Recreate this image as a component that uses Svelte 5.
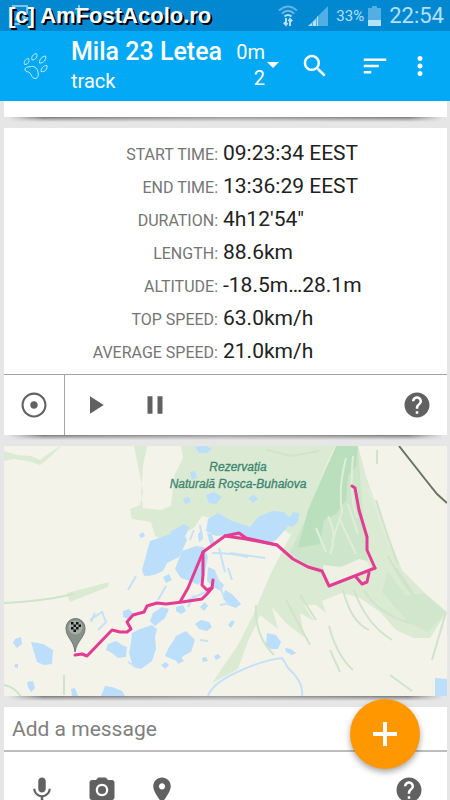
<script lang="ts">
	interface Stat {
		label: string;
		value: string;
	}

	const stats: Stat[] = [
		{ label: 'START TIME:', value: '09:23:34 EEST' },
		{ label: 'END TIME:', value: '13:36:29 EEST' },
		{ label: 'DURATION:', value: '4h12\'54"' },
		{ label: 'LENGTH:', value: '88.6km' },
		{ label: 'ALTITUDE:', value: '-18.5m…28.1m' },
		{ label: 'TOP SPEED:', value: '63.0km/h' },
		{ label: 'AVERAGE SPEED:', value: '21.0km/h' }
	];

	const lakes = [
		'M150 541l12-4 8-3 14 0 3 6-5 11-3 6-12 6-4 8-9 4-10 1-2-6z',
		'M170 532l14-8 5 3-3 8-10 3z',
		'M182 551l14-5 8 1 4 10-4 20-6 8-8-4-9-3-6-9z',
		'M208 519l10-6 14 8 18 6 8-10 14-6 12 1 8 8-7 10-9 10-8 4-20-5-20-4-12 1-10-5z',
		'M287 521l6-9 6 1-1 9-6 5-5-2z',
		'M206 495l8-3 8 5-6 7-7-1z',
		'M195 447l9-2 8 4-5 4-8 0z',
		'M132 633l8-4 12-4 5 4-2 8 1 12-4 12-11 8-8-2-4-14 2-10z',
		'M176 636l10-5 9 9-4 12-8 4-4 6-14-6 4-9 5-7z',
		'M108 644l8-3 6 4 5 2-1 10-8 1-6-5-6-3z',
		'M31 642l12 2 10 6-1 14-8 1-7-3-3-10z',
		'M15 639l6-2 1 7-5 4-4-5z',
		'M101 696l4-10 7 1 10 4 3 5z',
		'M267 633l9 2 5 7-3 7-7 0-5-4z',
		'M285 648l6 1 5 4-4 2-6-3z',
		'M435 678l12 1v17h-12z',
		'M225 590l7 4 9 10-5 4-8-3-5-7z',
		'M195 624l6-4 8 2 3 5-5 4-8-2z',
		'M176 607l7-2 3 6-5 3-5-3z',
		'M123 611l6-2 4 4-5 6-5-2z',
		'M27 682l6-1 2 7-4 4-3-5z',
		'M145 571l6-4 4 3-5 6-4-1z',
		'M153 613l9-6 7 2-4 9-10 8-5-5z',
		'M228 625l4-5 3 2-4 6z',
		'M208 567l7 3 3 9 6 6-3 6-8-4-6-6z',
		'M71 689l4-1 3 8h-6z',
		'M183 499l6-2 2 5-6 2z',
		'M248 498l6-3 4 4-5 4z',
		'M139 535l4-3 2 4-4 2z',
		'M200 607l5-5 3 4-4 5z',
		'M214 656l4-2 3 3-5 3z',
		'M202 658l4-1 2 4-5 1z',
		'M176 660l5-3 3 4-6 3z',
		'M15 664l3 0 0 4-4-1z',
		'M207 533l5 1 3 12-5-2z',
		'M198 534l4-4 1 9-4 3z',
		'M190 472l5-1 2 7-5 2z',
		'M161 665l5-3 3 3-4 4z',
		'M163 577l6-3 3 6-6 3z'
	];
</script>

<svg class="sprites" aria-hidden="true">
	<symbol id="help" viewBox="0 0 24 24">
		<path
			d="M12 2C6.48 2 2 6.48 2 12s4.48 10 10 10 10-4.48 10-10S17.52 2 12 2zm1 17h-2v-2h2v2zm2.07-7.75l-.9.92C13.45 12.9 13 13.5 13 15h-2v-.5c0-1.1.45-2.1 1.17-2.83l1.24-1.26c.37-.36.59-.86.59-1.41 0-1.1-.9-2-2-2s-2 .9-2 2H8c0-2.21 1.79-4 4-4s4 1.79 4 4c0 .88-.36 1.68-.93 2.25z"
		/>
	</symbol>
</svg>

<div class="screen">
	<div class="status">
		<svg class="ghost" viewBox="0 0 80 30" aria-hidden="true">
			<path d="M13 6h14v18h-14zM15 20l5-6 4 4 3-3" />
			<path d="M79 5v8M75 9h8" />
		</svg>
		<span class="watermark">[c] AmFostAcolo.ro</span>
		<svg class="wifi" viewBox="0 0 20 22" aria-hidden="true">
			<path d="M1 5.500Q10-2.500 19 5.500" opacity=".5" />
			<path d="M4 8.500Q10 3 16 8.500" opacity=".6" />
			<path d="M6.500 11.500Q10 8.500 13.500 11.500" />
			<path d="M8 13v6.500M5.800 17.500L8 20l1.500-2M12 21v-6.500M10.500 16.200L12 14l2.200 2.200" />
		</svg>
		<svg class="signal" viewBox="0 0 20 20" aria-hidden="true">
			<path d="M0 20L20 0v20z" opacity=".45" />
			<path d="M0 20l4-3v3zM5 20v-4l3-3v7zM9 20v-9l1-1v10z" />
		</svg>
		<span class="percent">33%</span>
		<svg class="battery" viewBox="0 0 13 20" aria-hidden="true">
			<path d="M4 0h5v2h4v12H0V2h4z" opacity=".45" />
			<path d="M0 14h13v6H0z" />
		</svg>
		<span class="clock">22:54</span>
	</div>

	<header>
		<svg class="paw" viewBox="0 0 26 28" aria-hidden="true">
			<path d="M8.500 14.500C5 15 1.500 15 2 18c.5 2 3.500 1.500 5 3 1.500 2 2 5.500 5 5.500 3.500 0 3.500-4 3-6.500-.5-3-3-6-6.500-5.500z" />
			<path d="M1.500 12.500c-1-3 1-5.500 4-6 1.500 3-.5 6-4 6z" />
			<path d="M9 8c-1-3 1-6 4.500-6.500 1.500 3-.5 6.500-4.500 6.500z" />
			<path d="M16.500 11c-.5-3.500 3-7 6-7 1 3.500-2 7.500-6 7z" />
			<path d="M18 19.500c0-3.500 2.500-6 6-6 .5 3.500-2 7-6 6z" />
		</svg>
		<div class="title">
			<h1>Mila 23 Letea</h1>
			<p>track</p>
		</div>
		<button class="zoom-level">
			<span>0m<br />2</span>
			<svg viewBox="0 0 12 6" aria-hidden="true"><path d="M0 0h12L6 6z" /></svg>
		</button>
		<button class="action" aria-label="Search">
			<svg class="icon" viewBox="0 0 24 24">
				<path
					d="M15.500 14h-.79l-.28-.27C15.410 12.590 16 11.110 16 9.500 16 5.910 13.090 3 9.500 3S3 5.910 3 9.500 5.910 16 9.500 16c1.610 0 3.090-.59 4.230-1.570l.27.28v.79l5 4.990L20.490 19l-4.990-5zm-6 0C7.010 14 5 11.990 5 9.500S7.010 5 9.500 5 14 7.010 14 9.500 11.990 14 9.500 14z"
				/>
			</svg>
		</button>
		<button class="action" aria-label="Sort">
			<svg class="icon" viewBox="0 0 24 24">
				<path d="M3 18h6v-2H3v2zM3 6v2h18V6H3zm0 7h12v-2H3v2z" />
			</svg>
		</button>
		<button class="more" aria-label="More options">
			<svg class="icon" viewBox="0 0 24 24">
				<path
					d="M12 8c1.100 0 2-.9 2-2s-.9-2-2-2-2 .9-2 2 .9 2 2 2zm0 2c-1.100 0-2 .9-2 2s.9 2 2 2 2-.9 2-2-.9-2-2-2zm0 6c-1.100 0-2 .9-2 2s.9 2 2 2 2-.9 2-2-.9-2-2-2z"
				/>
			</svg>
		</button>
	</header>

	<main>
		<section class="card previous"></section>

		<section class="card">
			<dl>
				{#each stats as stat}
					<div class="row">
						<dt>{stat.label}</dt>
						<dd>{stat.value}</dd>
					</div>
				{/each}
			</dl>
			<div class="controls">
				<button class="locate" aria-label="Show point">
					<svg class="icon" viewBox="0 0 24 24">
						<path
							d="M12 2C6.490 2 2 6.490 2 12s4.490 10 10 10 10-4.490 10-10S17.510 2 12 2zm0 18.300c-4.600 0-8.300-3.700-8.300-8.300S7.400 3.700 12 3.700s8.300 3.700 8.300 8.300-3.700 8.300-8.300 8.300zM15 12c0 1.660-1.340 3-3 3s-3-1.340-3-3 1.340-3 3-3 3 1.340 3 3z"
						/>
					</svg>
				</button>
				<button aria-label="Play">
					<svg class="icon" viewBox="0 0 24 24"><path d="M8 5v14l11-7z" /></svg>
				</button>
				<button aria-label="Pause">
					<svg class="icon" viewBox="0 0 24 24"><path d="M6 19h4V5H6v14zm8-14v14h4V5h-4z" /></svg>
				</button>
				<button class="end" aria-label="Help">
					<svg class="icon"><use href="#help" /></svg>
				</button>
			</div>
		</section>

		<section class="card map">
			<svg viewBox="4 446 443 250" role="img" aria-label="Track map">
				<!-- Reserve and grassland -->
				<g class="grass">
					<path
						d="M134 446h13l-4 20-2 30 2 12 18 2 10-4 3-30 9-18-2-12h154l-37 80-8 8-10-7-20 2-14 6-12-6-14-9-18-4-8 12-15 8-10 6-14-6-4-14-19-3-2-10 10-4 3-14z"
					/>
					<path d="M4 451l13 4 14 1 9 4 8-6 14-9-12 12-10 8-12-4-14-2-10 2z" />
					<path
						d="M337 446h21l8 30 14 40 22 54 24 24 21 18-8 12-9 14-16 0-18-8-16-18-20-14-18-5-20 8 4 12-10-8-12 0 10 16-14-8 4 24-8-6-10-8-14-16 6 22-18-14-4 10-8 16-10 28-26 14 26-38 16-32 16-38z"
					/>
					<path d="M67 593l42-11-1 5-38 15-2-5z" />
				</g>
				<g class="wood">
					<path d="M337 446h21l2 30 4 50 4 38-16 10-20 6-28-14-14-14 22-46z" opacity=".4" />
					<path d="M336 446l22 0-2 20-8 10-2 24-10 14-12 6-4 24-22 4 10-38z" />
					<path d="M388 572l18 24 18-3 22 19-18 20-20-10-26-30z" opacity=".3" />
				</g>
				<g class="strokes">
					<path d="M346 458q-8 30-4 54l-10 30M353 456q-4 40 4 62M328 516q10 20 2 38M340 520l16 34M316 528l10 24M348 504l10 30M368 488q12 30 22 60" />
				</g>
				<path class="clearing" d="M323 565l18 2 18-8 8 2 4 8-42 16-5-12z" />
				<g class="dark-strokes">
					<path d="M343 590q8 32 26 40M354 590q12 34 38 50M364 590q14 24 46 33M329 626q8 30 24 44M330 650l10 22M390 675l22 16M256 605q-2 30 18 50M286 600l24 45M300 595l16 25" />
					<path d="M388 556q12 24 28 42M396 568l20 30M376 500q14 44 22 64" />
					<path d="M267 450l24 6 28-5M377 450v14M446 612l-14 48" />
					<path d="M4 603q34-1 70-9M64 675v20M4 685q11 2 17 12" />
				</g>

				<!-- Water -->
				<g class="lakes">
					{#each lakes as lake}
						<path d={lake} />
					{/each}
				</g>
				<g class="streams">
					<path class="river" d="M208 696q5-14 34-26 22-10 40-12 3 4 6 10 16 14 14 28" />
					<path d="M200 525l2 14M190 540l4-10M212 553q20 0 36 4M230 553l35 5M216 575l8 22M219 548l6 24M90 620l12-8 4 10-8 8M128 590l8-14M188 600l22-10M206 700" />
					<path d="M95 613l-4 9M194 595l-6 12M158 600l8-14M128 662l10 6M200 640l8 1M232 580l-4-12M220 605l10-2" />
				</g>

				<path class="canal" d="M399 446l26 33 12 15 10 9" />
				<text x="238" y="471">Rezervația</text>
				<text x="238" y="488">Naturală Roșca-Buhaiova</text>

				<g class="track">
					<path
						d="M75 655L82 654L87 656L112 630L120 632L127 632L131 629L127 622L133 615L144 612L147 606L157 603L166 604L182 602L202 599L207 594L212 588L213 580"
					/>
					<path d="M180 602L188 588L203 552L225 536L239 533L246 538L277 545L293 559L308 567L322 571L329 586L375 568" />
					<path d="M225 536L246 539L277 545" />
					<path d="M375 568L367 550L367 537L359 510L355 488L352 486" />
					<path d="M203 552V575L202 585L207 590L212 588" />
					<path d="M356 577L362 584L367 582L369 573" />
				</g>

				<path class="pin" d="M75 652c-1-12-9-14-9-24a9.500 9.500 0 0 1 19 0c0 10-8 12-10 24z" />
				<circle class="flag" cx="75.500" cy="627.500" r="7" />
				<path
					class="checks"
					d="M71 622h2.500v2.500H71zM76 622h2.500v2.500H76zM73.500 624.500H76V627h-2.500zM78.500 624.500H81V627h-2.500zM71 627h2.500v2.500H71zM76 627h2.500v2.500H76zM73.500 629.500H76v2.500h-2.500z"
				/>
			</svg>
		</section>

		<section class="card">
			<input type="text" placeholder="Add a message" aria-label="Add a message" />
			<div class="attach">
				<button aria-label="Record audio">
					<svg class="icon" viewBox="0 0 24 24">
						<path
							d="M12 14c1.660 0 2.990-1.340 2.990-3L15 5c0-1.660-1.340-3-3-3S9 3.340 9 5v6c0 1.660 1.340 3 3 3zm5.300-3c0 3-2.540 5.100-5.300 5.100S6.700 14 6.700 11H5c0 3.410 2.720 6.230 6 6.720V21h2v-3.280c3.280-.48 6-3.300 6-6.720h-1.700z"
						/>
					</svg>
				</button>
				<button aria-label="Add photo">
					<svg class="icon" viewBox="0 0 24 24">
						<path
							fill-rule="evenodd"
							d="M9 2L7.170 4H4c-1.100 0-2 .9-2 2v12c0 1.100.9 2 2 2h16c1.100 0 2-.9 2-2V6c0-1.100-.9-2-2-2h-3.170L15 2H9zm3 15c-2.760 0-5-2.240-5-5s2.240-5 5-5 5 2.240 5 5-2.240 5-5 5z"
						/>
						<circle cx="12" cy="12" r="3.200" />
					</svg>
				</button>
				<button aria-label="Add location">
					<svg class="icon" viewBox="0 0 24 24">
						<path
							d="M12 2C8.130 2 5 5.130 5 9c0 5.250 7 13 7 13s7-7.750 7-13c0-3.870-3.130-7-7-7zm0 9.500c-1.380 0-2.500-1.120-2.500-2.500s1.120-2.500 2.500-2.500 2.500 1.120 2.500 2.500-1.120 2.500-2.500 2.500z"
						/>
					</svg>
				</button>
				<button class="end" aria-label="Message help">
					<svg class="icon"><use href="#help" /></svg>
				</button>
			</div>
		</section>
	</main>

	<button class="fab" aria-label="Add">
		<svg viewBox="0 0 28 28"><path d="M14 2v24M2 14h24" /></svg>
	</button>
</div>

<style>
	:global(body) {
		margin: 0;
		background: #e6e6e6;
	}

	.screen {
		display: flex;
		flex-direction: column;
		height: 100vh;
		overflow: hidden;
		font-family: Roboto, sans-serif;
		color: #212121;
	}

	.sprites {
		position: absolute;
		width: 0;
		height: 0;
	}

	button {
		display: flex;
		align-items: center;
		justify-content: center;
		padding: 0;
		border: 0;
		background: none;
		color: inherit;
		font: inherit;
		cursor: pointer;
	}

	.icon {
		display: block;
		width: 30px;
		height: 30px;
		fill: currentColor;
	}

	/* Status bar */
	.status {
		position: relative;
		display: flex;
		align-items: center;
		flex: none;
		height: 31px;
		padding: 0 6px 0 8px;
		background: #0288d1;
		color: #b3e1f8;
	}

	.status svg {
		fill: currentColor;
	}

	.status .ghost {
		position: absolute;
		left: 0;
		top: 0;
		width: 80px;
		height: 30px;
		overflow: visible;
		fill: none;
		stroke: #7cc4ea;
		stroke-width: 2;
	}

	.watermark {
		position: relative;
		margin-right: auto;
		font-family: 'Liberation Sans', Arial, sans-serif;
		font-size: 22px;
		font-weight: 700;
		line-height: 30px;
		color: #fff;
		text-shadow: 2px 2px 0 #000;
	}

	.status .wifi {
		width: 20px;
		height: 22px;
		margin-right: 10px;
		fill: none;
		stroke: currentColor;
		stroke-width: 2;
	}

	.signal {
		width: 20px;
		height: 20px;
		margin-right: 8px;
	}

	.percent {
		margin-right: 4px;
		font-size: 15px;
	}

	.battery {
		width: 13px;
		height: 20px;
		margin-right: 8px;
	}

	.clock {
		font-size: 22px;
	}

	/* App bar */
	header {
		display: flex;
		align-items: center;
		flex: none;
		height: 70px;
		padding-right: 15px;
		background: #03a9f4;
		color: #fff;
	}

	.paw {
		width: 26px;
		height: 28px;
		margin: 0 22px 0 23px;
		fill: none;
		stroke: #c5ecfd;
		stroke-width: 1;
	}

	.title {
		flex: 1;
		min-width: 0;
		white-space: nowrap;
	}

	.title h1 {
		margin: 0;
		font-size: 25px;
		font-weight: 500;
		line-height: 30px;
	}

	.title p {
		margin: 0;
		font-size: 20px;
		line-height: 28px;
	}

	.zoom-level {
		gap: 2px;
		padding: 0 6px 2px 0;
		font-size: 20px;
		line-height: 26px;
		text-align: right;
	}

	.zoom-level svg {
		width: 12px;
		height: 6px;
		fill: #fff;
	}

	.action {
		width: 60px;
		height: 60px;
	}

	.more {
		width: 30px;
		height: 60px;
	}

	/* Feed */
	main {
		display: flex;
		flex-direction: column;
		gap: 11px;
		flex: 1;
		min-height: 0;
		padding: 0 3px 0 4px;
	}

	.card {
		position: relative;
		flex: none;
		background: #fff;
	}

	.card::after {
		content: '';
		position: absolute;
		top: 100%;
		left: 4px;
		right: 4px;
		height: 5px;
		background: linear-gradient(#777, #aaa 40%, transparent);
		mask-image: linear-gradient(90deg, transparent, #000 8%, rgba(0, 0, 0, 0.7) 50%, #000 92%, transparent);
	}

	.previous {
		height: 16px;
	}

	dl {
		margin: 0;
		padding: 9px 0 6px;
	}

	.row {
		display: grid;
		grid-template-columns: 1fr 1fr;
		column-gap: 5px;
		align-items: baseline;
		height: 33px;
		padding-right: 10px;
		line-height: 32px;
	}

	dt {
		font-size: 16px;
		color: #757575;
		text-align: right;
	}

	dd {
		margin: 0;
		font-size: 21px;
	}

	.controls {
		display: flex;
		border-top: 1px solid #a5a5a5;
		color: #616161;
	}

	.controls button {
		width: 60px;
		height: 60px;
	}

	.controls .locate {
		width: 61px;
		border-right: 1px solid #a5a5a5;
	}

	.controls .end,
	.attach .end {
		margin-left: auto;
	}

	/* Map */
	.map {
		background: #f4f3ea;
	}

	.map > svg {
		display: block;
		width: 100%;
		height: auto;
		overflow: hidden;
	}

	.grass {
		fill: #dbead3;
	}

	.wood {
		fill: #b9dfbd;
	}

	.clearing {
		fill: #f0f1e5;
	}

	.strokes {
		fill: none;
		stroke: #e0eed9;
		stroke-width: 2;
	}

	.dark-strokes {
		fill: none;
		stroke: #cfe4ca;
		stroke-width: 2;
	}

	.lakes {
		fill: #bbdefb;
	}

	.streams {
		fill: none;
		stroke: #c5e1f7;
		stroke-width: 2;
	}

	.canal {
		fill: none;
		stroke: #667562;
		stroke-width: 2;
	}

	.map text {
		fill: #3a8570;
		stroke: #3a8570;
		stroke-width: 0.3;
		font-family: 'Liberation Sans', Arial, sans-serif;
		font-size: 12px;
		font-style: italic;
		text-anchor: middle;
	}

	.track {
		fill: none;
		stroke: #e23d92;
		stroke-width: 3;
		stroke-linecap: round;
		stroke-linejoin: round;
	}

	.pin {
		fill: #87928a;
		stroke: #6c776f;
		stroke-width: 1;
	}

	.flag {
		fill: #a5aea7;
	}

	.checks {
		fill: #111;
	}

	/* Composer */
	input {
		display: block;
		box-sizing: border-box;
		width: 100%;
		height: 45px;
		padding: 0 8px;
		border: 0;
		border-bottom: 2px solid #bdbdbd;
		background: none;
		font: 21px Roboto, sans-serif;
		color: #212121;
		outline: none;
	}

	input::placeholder {
		color: #808080;
		opacity: 1;
	}

	.attach {
		display: flex;
		padding: 8px;
		color: #616161;
	}

	.attach button {
		width: 60px;
		height: 60px;
	}

	.fab {
		position: fixed;
		right: 30px;
		bottom: 31px;
		width: 70px;
		height: 70px;
		border-radius: 50%;
		background: #ff9800;
		box-shadow: 0 3px 6px rgba(0, 0, 0, 0.35);
	}

	.fab svg {
		width: 28px;
		height: 28px;
		fill: none;
		stroke: #fff;
		stroke-width: 4;
	}
</style>
